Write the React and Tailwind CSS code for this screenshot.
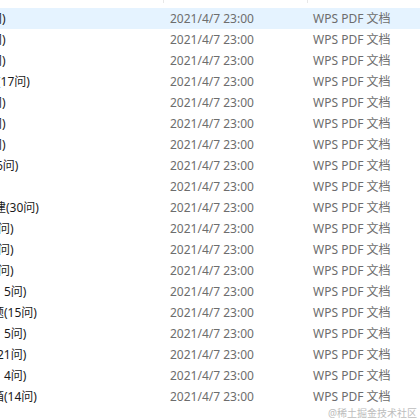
import React from 'react';

const rows = [
  { name: '问)', ml: '-ml-[10px]' },
  { name: '问)', ml: '-ml-[10px]' },
  { name: '问)', ml: '-ml-[10px]' },
  { name: '(17问)', ml: '-ml-[3px]' },
  { name: '问)', ml: '-ml-[10px]' },
  { name: '问)', ml: '-ml-[10px]' },
  { name: '问)', ml: '-ml-[10px]' },
  { name: '6问)', ml: '-ml-[4px]' },
  { name: '', ml: 'ml-0' },
  { name: '建(30问)', ml: '-ml-[6px]' },
  { name: '问)', ml: '-ml-[2px]' },
  { name: '问)', ml: '-ml-[2px]' },
  { name: '问)', ml: '-ml-[2px]' },
  { name: '5问)', ml: 'ml-[4px]' },
  { name: '题(15问)', ml: '-ml-[8px]' },
  { name: '5问)', ml: 'ml-[4px]' },
  { name: '21问)', ml: '-ml-[3px]' },
  { name: '4问)', ml: 'ml-[4px]' },
  { name: '箱(14问)', ml: '-ml-[8px]' },
];

function Row({ name, ml, hover }) {
  return (
    <div className={`flex h-[21px] items-center ${hover ? 'bg-[#e5f3ff]' : ''}`}>
      <div className="w-[163px] overflow-hidden whitespace-nowrap text-[#1a1a1a]">
        <span className={`inline-block ${ml}`}>{name}</span>
      </div>
      <div className="w-[144px] pl-[7px] text-[#6d6d6d]">2021/4/7 23:00</div>
      <div className="flex-1 pl-[6px] text-[#6d6d6d]">WPS PDF 文档</div>
    </div>
  );
}

export default function App() {
  return (
    <div
      className="relative h-[420px] w-[420px] overflow-hidden bg-white text-[12px]"
      style={{ fontFamily: '"Noto Sans", "Noto Sans CJK SC", sans-serif' }}
    >
      {/* header leftovers */}
      <div className="flex h-[8px]">
        <div className="w-[163px]" />
        <div className="h-[3px] w-px bg-[#e8e8e8]" />
        <div className="w-[143px]" />
        <div className="h-[3px] w-px bg-[#e8e8e8]" />
      </div>
      {rows.map((r, i) => (
        <Row key={i} name={r.name} ml={r.ml} hover={i === 0} />
      ))}
      <div className="absolute bottom-[2px] right-[3px] text-[10px] leading-none text-[#bdbdbd]">
        @稀土掘金技术社区
      </div>
    </div>
  );
}
